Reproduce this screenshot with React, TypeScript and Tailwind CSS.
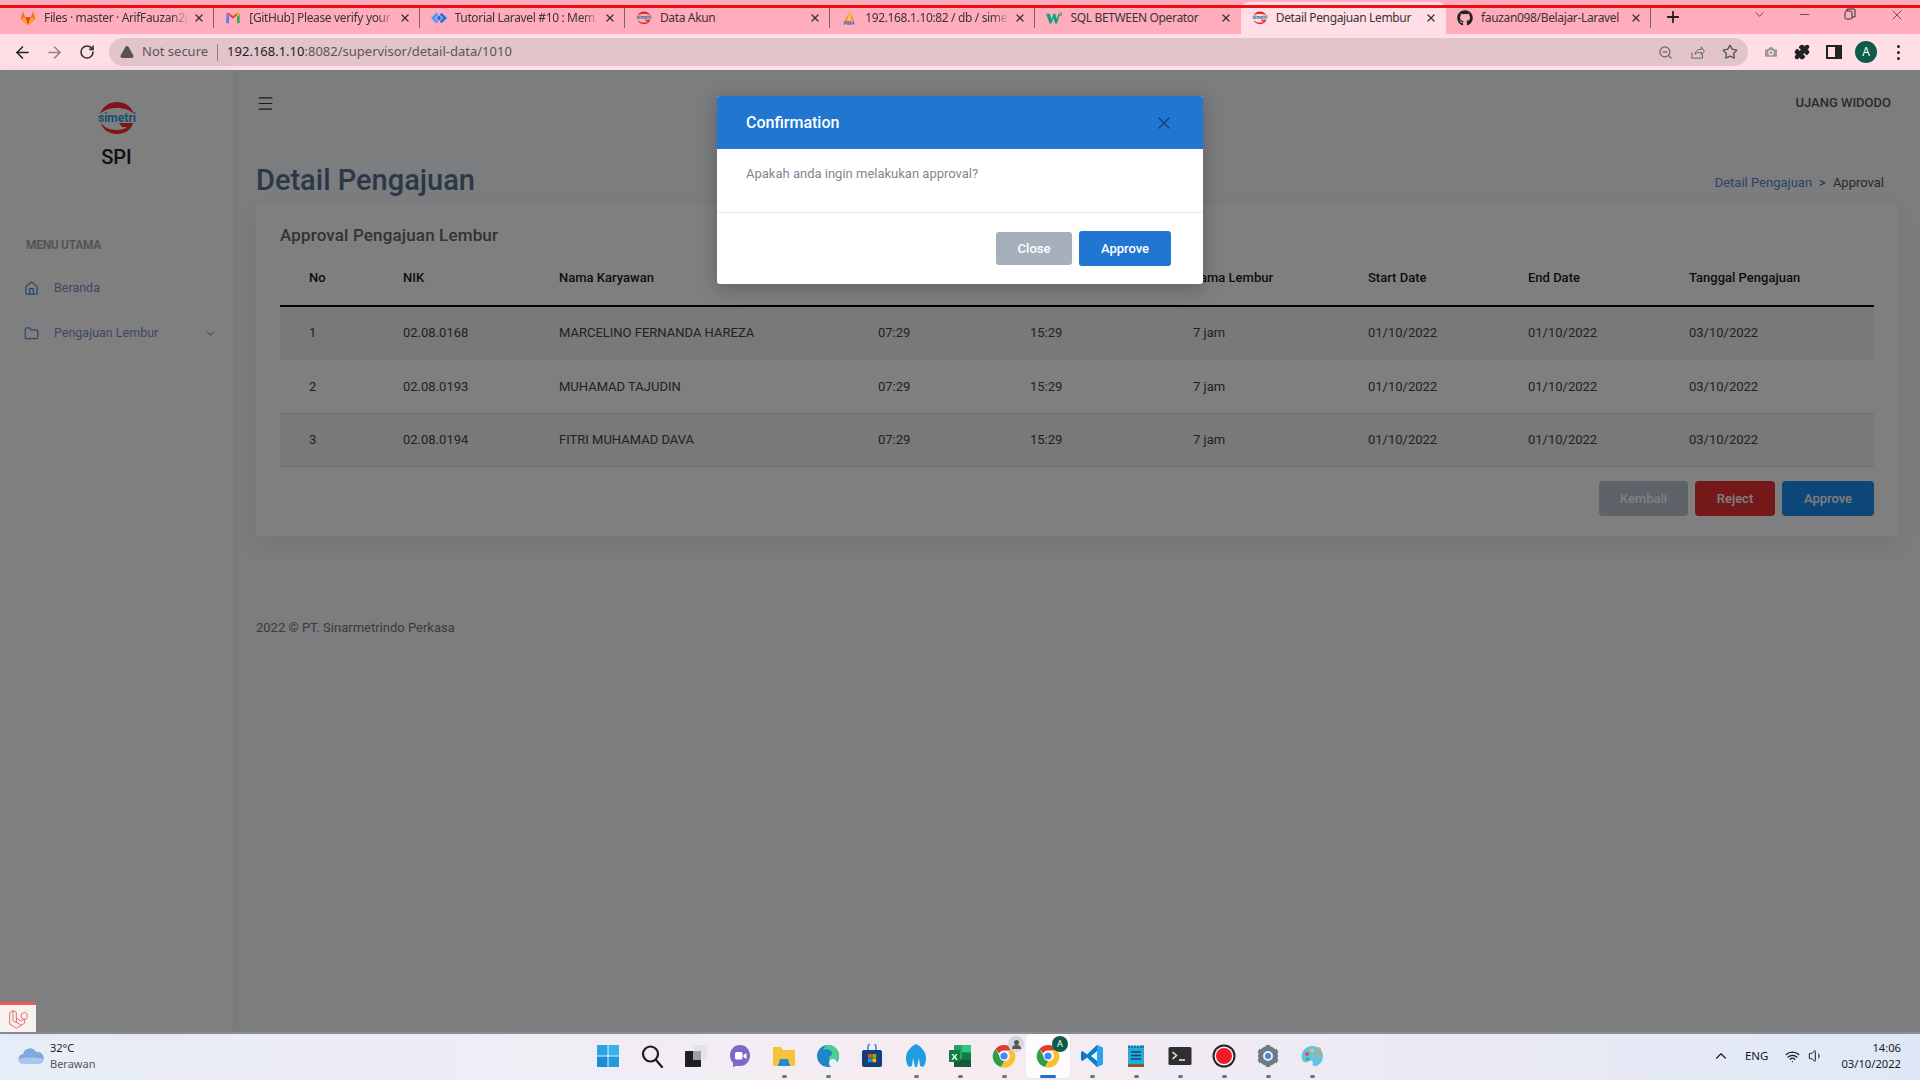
import { ReactNode } from "react";
import {
  ArrowLeft,
  ArrowRight,
  Camera,
  ChevronDown,
  ChevronUp,
  Folder,
  House,
  Menu,
  Minus,
  Plus,
  Puzzle,
  RotateCw,
  Star,
  TriangleAlert,
  Volume1,
  Wifi,
  X,
  ZoomOut,
} from "lucide-react";
import { FaGithub } from "react-icons/fa";

function SimetriLogo({ size = 16, red = "#e0262c", teal = "#1f6f9f" }: { size?: number; red?: string; teal?: string }) {
  return (
    <svg width={size} height={size * 0.85} viewBox="0 0 40 34">
      <path d="M3 13C6 5 12 1 20 1s14 4 17 12c-4-4-10-6-17-6S7 9 3 13z" fill={red} />
      <path d="M4 22c2 7 8 11 16 11 8 0 14-4 16-11H22l3 4h5c-2 2-6 3-10 3-7 0-12-2-16-7z" fill={red} />
      <text x="20" y="21" textAnchor="middle" fontSize="12" fontWeight="700" textLength="38" lengthAdjust="spacingAndGlyphs" fontFamily="Roboto, sans-serif" fill={teal}>
        simetri
      </text>
    </svg>
  );
}

function GitlabIcon() {
  return (
    <svg width="16" height="16" viewBox="0 0 24 24">
      <path d="M12 23 1 14 4 2l4 9h8l4-9 3 12z" fill="#fc6d26" />
      <path d="M12 23 8 11h8z" fill="#e24329" />
      <path d="M12 23 1 14l7-3zM12 23l11-9-7-3z" fill="#fca326" />
    </svg>
  );
}

function GmailIcon() {
  return (
    <svg width="16" height="16" viewBox="0 0 24 24">
      <path d="M2 5v15h4V10z" fill="#4285f4" />
      <path d="M22 5v15h-4V10z" fill="#34a853" />
      <path d="M2 5l10 8 10-8-3-1-7 5-7-5z" fill="#ea4335" />
      <path d="M18 5v5l4-3V5z" fill="#fbbc04" />
    </svg>
  );
}

function DiamondIcon() {
  return (
    <svg width="16" height="16" viewBox="0 0 24 24">
      <path d="M8 4 0 12l8 8 3-3-5-5 5-5z" fill="#4a9bf0" />
      <path d="M16 4l8 8-8 8-3-3 5-5-5-5z" fill="#1a73e8" />
      <path d="M12 8l4 4-4 4-4-4z" fill="#1a73e8" />
    </svg>
  );
}

function PmaIcon() {
  return (
    <svg width="18" height="18" viewBox="0 0 24 24">
      <path d="M13 1 5 16h15z" fill="#f0a030" />
      <path d="M13 1 10 16h5z" fill="#f8c870" />
      <text x="12" y="23" textAnchor="middle" fontSize="7.5" fontWeight="700" fontStyle="italic" fontFamily="Liberation Sans, sans-serif" fill="#39579a">
        PMA
      </text>
    </svg>
  );
}

function W3Icon() {
  return (
    <svg width="18" height="16" viewBox="0 0 26 22">
      <path d="M0 4h6l3 9 3-9h3l3 9 2-9h3l-5 16h-3l-3-9-3 9H6z" fill="#10a37f" />
      <text x="24" y="8" textAnchor="middle" fontSize="8" fontWeight="700" fontFamily="Roboto, sans-serif" fill="#10a37f">
        3
      </text>
    </svg>
  );
}

const tabs: { title: string; icon: ReactNode; active?: boolean; fade?: boolean; sep?: boolean }[] = [
  { title: "Files · master · ArifFauzan2(", icon: <GitlabIcon />, fade: true, sep: true },
  { title: "[GitHub] Please verify your", icon: <GmailIcon />, fade: true, sep: true },
  { title: "Tutorial Laravel #10 : Mem", icon: <DiamondIcon />, fade: true, sep: true },
  { title: "Data Akun", icon: <SimetriLogo />, sep: true },
  { title: "192.168.1.10:82 / db / sime", icon: <PmaIcon />, fade: true, sep: true },
  { title: "SQL BETWEEN Operator", icon: <W3Icon /> },
  { title: "Detail Pengajuan Lembur", icon: <SimetriLogo />, active: true },
  { title: "fauzan098/Belajar-Laravel", icon: <FaGithub size={16} color="#222" />, sep: true },
];

function BrowserTab({ title, icon, active, fade, sep }: { title: string; icon: ReactNode; active?: boolean; fade?: boolean; sep?: boolean }) {
  return (
    <div
      className={
        active
          ? "flex h-[32px] w-[205.300px] items-center rounded-t-lg bg-[#ffdfe5] pl-[11px]"
          : "flex h-[32px] w-[205.300px] items-center pl-[11px]"
      }
    >
      <span className="flex w-[16px] shrink-0 items-center justify-center">{icon}</span>
      <span
        className={
          fade
            ? "ml-[8px] min-w-0 flex-1 whitespace-nowrap text-[12px] tracking-[-0.35px] text-[#3a3436] [mask-image:linear-gradient(to_right,black_88%,transparent)]"
            : "ml-[8px] min-w-0 flex-1 whitespace-nowrap text-[12px] tracking-[-0.35px] text-[#3a3436]"
        }
      >
        {title}
      </span>
      <X size={12} strokeWidth={2.6} className="ml-[4px] shrink-0 text-[#333]" />
      <span className={sep ? "ml-[8px] h-[20px] w-px shrink-0 bg-[#7a6468]" : "ml-[8px] h-[20px] w-px shrink-0 bg-transparent"} />
    </div>
  );
}

function Chrome({ badge }: { badge: ReactNode }) {
  return (
    <div className="relative h-[24px] w-[24px]">
      <svg width="24" height="24" viewBox="0 0 24 24">
        <path d="M12 1a11 11 0 0 1 9.500 5.500H12A5.500 5.500 0 0 0 7 9.500L3.500 5A11 11 0 0 1 12 1z" fill="#e33b2e" />
        <path d="M3.500 5 8 13a5 5 0 0 0 4.500 4L9 23A11 11 0 0 1 3.500 5z" fill="#2d9d48" />
        <path d="M21.500 6.500A11 11 0 0 1 9 23l4-6a5 5 0 0 0 4-8 5 5 0 0 0-1-2.500z" fill="#fbc02d" />
        <circle cx="12" cy="12" r="4.600" fill="#fff" />
        <circle cx="12" cy="12" r="3.600" fill="#4285f4" />
      </svg>
      {badge}
    </div>
  );
}

const taskIcons: { icon: ReactNode; dot?: boolean; active?: boolean }[] = [
  {
    icon: (
      <svg width="24" height="24" viewBox="0 0 24 24">
        <rect x="1" y="1" width="10.500" height="10.500" fill="#2aa4e8" />
        <rect x="12.500" y="1" width="10.500" height="10.500" fill="#36b4f0" />
        <rect x="1" y="12.500" width="10.500" height="10.500" fill="#1a8cd8" />
        <rect x="12.500" y="12.500" width="10.500" height="10.500" fill="#1f9ae0" />
      </svg>
    ),
  },
  {
    icon: (
      <svg width="24" height="24" viewBox="0 0 24 24" fill="none" stroke="#1b1b1b" strokeWidth="2.200" strokeLinecap="round">
        <circle cx="10.500" cy="10" r="7.500" />
        <path d="M16 16l6 7" />
      </svg>
    ),
  },
  {
    icon: (
      <svg width="24" height="24" viewBox="0 0 24 24">
        <rect x="9" y="1" width="14" height="15" rx="1" fill="#e4e4e8" />
        <rect x="1" y="7" width="16" height="16" rx="1" fill="#1f1f1f" />
        <rect x="9" y="7" width="8" height="9" fill="#a0a0a4" />
      </svg>
    ),
  },
  {
    icon: (
      <svg width="24" height="24" viewBox="0 0 24 24">
        <path d="M12 1c6 0 10 5 10 10.500S18 22 12 22c-1 0-2 0-3-.3L5 23v-4C3 17 2 14 2 11.500 2 6 6 1 12 1z" fill="#7b68c8" />
        <rect x="7" y="8" width="7.500" height="7.500" rx="1.500" fill="#fff" />
        <path d="M15.500 11l3-2v6l-3-2z" fill="#fff" />
      </svg>
    ),
  },
  {
    icon: (
      <svg width="24" height="24" viewBox="0 0 24 24">
        <path d="M1 3h8l2 3h12v16H1z" fill="#f5c33b" />
        <path d="M8 15h8l2 7H6z" fill="#2b86d0" />
      </svg>
    ),
    dot: true,
  },
  {
    icon: (
      <svg width="24" height="24" viewBox="0 0 24 24">
        <circle cx="12" cy="12" r="11" fill="#1c86c8" />
        <path d="M12 1a11 11 0 0 1 11 11c0 3-3 5-6 5-3 0-4-2-4-3 0-2 3-2 3-5 0-3-5-5-9-3 1-3 3-5 5-5z" fill="#4fd08a" />
        <circle cx="17" cy="19" r="4" fill="#eaeef6" />
      </svg>
    ),
    dot: true,
  },
  {
    icon: (
      <svg width="24" height="24" viewBox="0 0 24 24">
        <path d="M8 6V3a4 4 0 0 1 8 0v3" fill="none" stroke="#2f8fd0" strokeWidth="1.600" />
        <rect x="2" y="6" width="20" height="17" rx="2" fill="#143d78" />
        <rect x="8" y="10" width="3.800" height="3.800" fill="#f25022" />
        <rect x="12.400" y="10" width="3.800" height="3.800" fill="#7fba00" />
        <rect x="8" y="14.400" width="3.800" height="3.800" fill="#00a4ef" />
        <rect x="12.400" y="14.400" width="3.800" height="3.800" fill="#ffb900" />
      </svg>
    ),
  },
  {
    icon: (
      <svg width="24" height="24" viewBox="0 0 24 24">
        <path d="M12 0c6 3 10 8 10 14 0 4-1 7-3 9l-3-1-1-8-2 9h-2l-2-9-1 8-3 1c-2-2-3-5-3-9C2 8 6 3 12 0z" fill="#1f9de0" />
      </svg>
    ),
    dot: true,
  },
  {
    icon: (
      <svg width="24" height="24" viewBox="0 0 24 24">
        <rect x="6" y="1" width="17" height="22" rx="1" fill="#21a366" />
        <rect x="14" y="1" width="9" height="7.500" fill="#33c481" />
        <rect x="14" y="8.500" width="9" height="7" fill="#107c41" />
        <rect x="6" y="15.500" width="17" height="7.500" fill="#185c37" />
        <rect x="1" y="6" width="11" height="12" rx="1" fill="#107c41" />
        <text x="6.500" y="15.500" textAnchor="middle" fontSize="9.500" fontWeight="700" fontFamily="Liberation Sans, sans-serif" fill="#fff">
          X
        </text>
      </svg>
    ),
    dot: true,
  },
  {
    icon: (
      <Chrome
        badge={
          <span className="absolute right-[-8px] top-[-8px] flex h-[16px] w-[16px] items-center justify-center rounded-full bg-[#d3d6da]">
            <span className="mt-[-3px] h-[5px] w-[5px] rounded-full bg-[#555]" />
            <span className="absolute bottom-[3px] h-[4px] w-[9px] rounded-t-full bg-[#555]" />
          </span>
        }
      />
    ),
    dot: true,
  },
  {
    icon: (
      <Chrome
        badge={
          <span className="absolute right-[-8px] top-[-8px] flex h-[16px] w-[16px] items-center justify-center rounded-full bg-[#0d5c4b] text-[9px] text-white">
            A
          </span>
        }
      />
    ),
    active: true,
  },
  {
    icon: (
      <svg width="24" height="24" viewBox="0 0 24 24">
        <path d="M17 1l6 3v16l-6 3-10-9.500L2.500 17 1 16v-8l1.500-1L7 10.500z" fill="#0a7acc" />
        <path d="M17 1l6 3v16l-6 3z" fill="#2ba3ee" />
        <path d="M17 7l-6 5 6 5z" fill="#f3f1f5" />
      </svg>
    ),
    dot: true,
  },
  {
    icon: (
      <svg width="24" height="24" viewBox="0 0 24 24">
        <rect x="4" y="2" width="16" height="21" rx="1" fill="#25a9e0" />
        <rect x="4" y="20" width="16" height="3" fill="#8a5a2c" />
        <path d="M5 1v3M8 1v3M11 1v3M14 1v3M17 1v3M19 1v3" stroke="#174a6e" strokeWidth="1" />
        <path d="M7 8h10M7 11.500h10M7 15h10" stroke="#123f66" strokeWidth="1.400" />
      </svg>
    ),
    dot: true,
  },
  {
    icon: (
      <svg width="24" height="24" viewBox="0 0 24 24">
        <rect x="0.500" y="3" width="23" height="18" rx="1.500" fill="#2f2f2f" />
        <path d="M4.500 8l4 3.500-4 3.500" fill="none" stroke="#eee" strokeWidth="1.500" />
        <path d="M11 16h6" stroke="#eee" strokeWidth="1.500" />
      </svg>
    ),
    dot: true,
  },
  {
    icon: (
      <svg width="24" height="24" viewBox="0 0 24 24">
        <circle cx="12" cy="12" r="11.500" fill="#222" />
        <circle cx="12" cy="12" r="9.500" fill="#f4f4f4" />
        <circle cx="12" cy="12" r="8" fill="#ee1c25" />
      </svg>
    ),
    dot: true,
  },
  {
    icon: (
      <svg width="24" height="24" viewBox="0 0 24 24" fill="none">
        <circle cx="12" cy="12" r="7.500" stroke="#6d7a88" strokeWidth="5" />
        <path d="M12 1v4M12 19v4M2.500 6.500l3.400 2M18 15.500l3.500 2M2.500 17.500l3.400-2M18 8.500l3.500-2" stroke="#6d7a88" strokeWidth="4" />
        <circle cx="12" cy="12" r="3" fill="#3d8fd0" />
      </svg>
    ),
    dot: true,
  },
  {
    icon: (
      <svg width="24" height="24" viewBox="0 0 24 24">
        <path d="M12 2c6 0 11 4 11 10 0 7-6 11-9 10-3-1 0-4-2-5-3-1-5 3-8 1C1 16 1 11 3 7c2-3 5-5 9-5z" fill="#62c3e6" />
        <circle cx="7" cy="10" r="2" fill="#e8483f" />
        <circle cx="12" cy="6.500" r="2" fill="#f5c33b" />
        <circle cx="7.500" cy="15" r="1.800" fill="#4caf50" />
        <path d="M19 3l2 1-3 10-2-1z" fill="#e0a050" />
      </svg>
    ),
    dot: true,
  },
];

const rows = [
  { no: 1, nik: "02.08.0168", nama: "MARCELINO FERNANDA HAREZA" },
  { no: 2, nik: "02.08.0193", nama: "MUHAMAD TAJUDIN" },
  { no: 3, nik: "02.08.0194", nama: "FITRI MUHAMAD DAVA" },
];

const headers = ["No", "NIK", "Nama Karyawan", "Jam Mulai", "Jam Selesai", "Lama Lembur", "Start Date", "End Date", "Tanggal Pengajuan"];

export default function App() {
  return (
    <div className="relative flex h-screen w-full flex-col overflow-hidden font-['Noto_Sans',sans-serif]">
      {/* chrome tab strip */}
      <div className="relative flex h-[34px] shrink-0 items-end bg-[#ffadbc] pl-[9px]">
        {tabs.map((t) => (
          <BrowserTab key={t.title} title={t.title} icon={t.icon} active={t.active} fade={t.fade} sep={t.sep} />
        ))}
        <Plus size={18} strokeWidth={2.400} className="mb-[8px] ml-[13px] text-[#222]" />
        <div className="ml-auto flex h-full items-start pt-[7px] text-[#333]">
          <ChevronDown size={15} strokeWidth={1.200} className="mr-[30px]" />
          <Minus size={15} strokeWidth={1.200} className="mr-[32px]" />
          <svg width="12" height="12" viewBox="0 0 12 12" fill="none" stroke="#333" className="mr-[33px] mt-[1px]">
            <rect x="1" y="3" width="7" height="8" rx="1.500" />
            <path d="M3 3V1h7a1 1 0 0 1 1 1v7H8" />
          </svg>
          <X size={16} strokeWidth={1.100} className="mr-[15px]" />
        </div>
        <div className="absolute inset-x-0 top-[5px] h-[3px] bg-[#ee0f14]" />
      </div>

      {/* chrome toolbar */}
      <div className="flex h-[36px] shrink-0 items-center bg-[#ffdfe5] pl-[13px]">
        <ArrowLeft size={19} className="text-[#222]" />
        <ArrowRight size={19} className="ml-[13px] text-[#8f8689]" />
        <RotateCw size={16} strokeWidth={2.400} className="ml-[15px] text-[#333]" />
        <div className="ml-[14px] flex h-[28px] w-[1639px] items-center rounded-full bg-[#e2c4ca] pl-[11px] pr-[10px]">
          <TriangleAlert size={14} strokeWidth={2.400} fill="#555" className="text-[#555]" />
          <span className="ml-[8px] text-[13px] text-[#5c5457]">Not secure</span>
          <span className="ml-[9px] h-[17px] w-px bg-[#8f7f83]" />
          <span className="ml-[9px] text-[13px] text-[#222]">
            192.168.1.10<span className="text-[#5c5457]">:8082/supervisor/detail-data/1010</span>
          </span>
          <ZoomOut size={15} className="ml-auto text-[#666]" />
          <svg width="15" height="15" viewBox="0 0 24 24" fill="none" stroke="#666" strokeWidth="1.600" className="ml-[17px]">
            <path d="M3 12v9h17v-6M8 15c1-6 5-8 10-8V3l5 7-5 6v-4c-4 0-8 0-10 3z" />
          </svg>
          <Star size={16} className="ml-[17px] text-[#555]" />
        </div>
        <Camera size={16} fill="#999" className="ml-[15px] text-[#ffdfe5]" />
        <Puzzle size={16} fill="#222" className="ml-[15px] text-[#222]" />
        <span className="ml-[16px] h-[14px] w-[16px] border-[2px] border-r-[7px] border-[#222]" />
        <span className="ml-[13px] flex h-[22px] w-[22px] items-center justify-center rounded-full bg-[#0d5c4b] text-[12px] text-white">A</span>
        <span className="ml-[20px] flex flex-col gap-[3px]">
          <span className="h-[3px] w-[3px] rounded-full bg-[#222]" />
          <span className="h-[3px] w-[3px] rounded-full bg-[#222]" />
          <span className="h-[3px] w-[3px] rounded-full bg-[#222]" />
        </span>
      </div>

      {/* web page */}
      <div className="relative flex min-h-0 flex-1 bg-[#f9fafe] font-['Roboto',sans-serif]">
        <aside className="flex w-[233px] shrink-0 flex-col bg-white shadow-[0_0_12px_rgba(0,0,0,0.06)]">
          <div className="flex flex-col items-center pt-[31px]">
            <SimetriLogo size={40} red="#ff2a30" teal="#28a0de" />
            <span className="mt-[9px] text-[20px] font-medium leading-[26px] text-[#222]">SPI</span>
          </div>
          <div className="mt-[67px] pl-[26px] text-[12px] font-bold leading-[16px] tracking-[-0.3px] text-[#a8a8a8]">MENU UTAMA</div>
          <div className="mt-[23px] flex h-[24px] items-center pl-[24px] text-[12.500px] text-[#7d8fc6]">
            <House size={15} className="text-[#5b8fe8]" />
            <span className="ml-[15px]">Beranda</span>
          </div>
          <div className="mt-[21px] flex h-[24px] items-center pl-[24px] pr-[16px] text-[12.500px] text-[#7d8fc6]">
            <Folder size={15} className="text-[#5b8fe8]" />
            <span className="ml-[15px]">Pengajuan Lembur</span>
            <ChevronDown size={13} className="ml-auto text-[#aaa]" />
          </div>
        </aside>

        <main className="min-w-0 flex-1">
          <div className="flex h-[66px] items-center justify-between pl-[23px] pr-[29px]">
            <Menu size={19} strokeWidth={1.500} className="text-[#333]" />
            <span className="text-[13px] font-medium text-[#555]">UJANG WIDODO</span>
          </div>

          <div className="pl-[23px] pr-[22px]">
            <div className="flex h-[69px] items-center justify-between pb-[2px] pt-[20px]">
              <h1 className="text-[29px] font-medium leading-[36px] text-[#547090]">Detail Pengajuan</h1>
              <div className="mr-[14px] mt-[7px] text-[13px] text-[#555]">
                <span className="text-[#5888d0]">Detail Pengajuan</span>
                <span className="mx-[7px]">&gt;</span>
                <span>Approval</span>
              </div>
            </div>

            <div className="rounded-[3px] bg-white pb-[20px] pl-[24px] pr-[24px] pt-[20px] shadow-[0_8px_24px_rgba(0,0,0,0.08)]">
              <h2 className="text-[17px] font-medium leading-[20px] tracking-[0.15px] text-[#666]">Approval Pengajuan Lembur</h2>
              <table className="mt-[5px] w-full table-fixed border-collapse text-[13px] text-[#444]">
                <colgroup>
                  <col className="w-[94px]" />
                  <col className="w-[156px]" />
                  <col className="w-[319px]" />
                  <col className="w-[152px]" />
                  <col className="w-[163px]" />
                  <col className="w-[175px]" />
                  <col className="w-[160px]" />
                  <col className="w-[161px]" />
                  <col className="w-[214px]" />
                </colgroup>
                <thead>
                  <tr className="h-[56px] border-b-2 border-[#000]">
                    {headers.map((h) => (
                      <th key={h} className="pl-[29px] text-left font-medium text-[#1c1c1c]">
                        {h}
                      </th>
                    ))}
                  </tr>
                </thead>
                <tbody>
                  {rows.map((r) => (
                    <tr key={r.no} className={r.no % 2 === 1 ? "h-[53.500px] border-b border-[#e8e8e8] bg-[#f2f2f2]" : "h-[53.500px] border-b border-[#e8e8e8]"}>
                      <td className="pl-[29px]">{r.no}</td>
                      <td className="pl-[29px]">{r.nik}</td>
                      <td className="pl-[29px]">{r.nama}</td>
                      <td className="pl-[29px]">07:29</td>
                      <td className="pl-[29px]">15:29</td>
                      <td className="pl-[29px]">7 jam</td>
                      <td className="pl-[29px]">01/10/2022</td>
                      <td className="pl-[29px]">01/10/2022</td>
                      <td className="pl-[29px]">03/10/2022</td>
                    </tr>
                  ))}
                </tbody>
              </table>
              <div className="mt-[14px] flex justify-end gap-[7px] text-[13px] font-medium">
                <button className="h-[35px] w-[89px] rounded-[4px] bg-[#bcc6d2] text-white">Kembali</button>
                <button className="h-[35px] w-[80px] rounded-[4px] bg-[#e83034] text-white">Reject</button>
                <button className="h-[35px] w-[92px] rounded-[4px] bg-[#1a8cf0] text-white">Approve</button>
              </div>
            </div>

            <p className="mt-[82px] text-[13px] leading-[20px] text-[#777]">2022 © PT. Sinarmetrindo Perkasa</p>
          </div>
        </main>

        {/* modal backdrop */}
        <div className="absolute inset-0 bg-black/50" />

        <div className="absolute left-[717px] top-[26px] w-[486px] overflow-hidden rounded-[3px] bg-white shadow-[0_4px_20px_rgba(0,0,0,0.25)]">
          <div className="flex h-[53px] items-center justify-between bg-[#2076d1] pl-[29px] pr-[29px]">
            <span className="text-[16px] font-medium text-white">Confirmation</span>
            <X size={20} strokeWidth={1.500} className="text-[#123f70]" />
          </div>
          <div className="flex h-[64px] items-start border-b border-[#e4e6ea] pl-[29px] pt-[15px] text-[13px] leading-[20px] text-[#7f8790]">
            Apakah anda ingin melakukan approval?
          </div>
          <div className="flex h-[71px] items-start justify-end gap-[7px] pr-[32px] pt-[18px] text-[13px] font-medium text-white">
            <button className="mt-px h-[33px] w-[76px] rounded-[3px] bg-[#a6b0bd]">Close</button>
            <button className="h-[35px] w-[92px] rounded-[3px] bg-[#2076d1]">Approve</button>
          </div>
        </div>

        {/* debugbar tab */}
        <div className="absolute bottom-0 left-0 flex h-[30px] w-[36px] items-center justify-center border-t-[3px] border-[#e8585e] bg-[#f5f2f0]">
          <svg width="20" height="20" viewBox="0 0 24 24" fill="none" stroke="#e8585e" strokeWidth="1">
            <path d="M2 4l4-2 4 2v12l6 3.500M2 4v14l8 5 10-6v-5l-4 2.500-6-3.500M6 2v12l4 2.500M16 6l4-2 3 2v5l-3 1.500M16 6v5l4 1.500" />
          </svg>
        </div>
      </div>

      {/* windows taskbar */}
      <div className="grid h-[48px] shrink-0 grid-cols-[1fr_auto_1fr] items-center border-t-2 border-[#8b8d93] bg-gradient-to-r from-[#e7edf8] via-[#f6ecf2] to-[#dfe8f6] pb-[2px] font-['Noto_Sans',sans-serif]">
        <div className="flex items-center pl-[18px]">
          <svg width="26" height="18" viewBox="0 0 26 18">
            <path d="M6 17a5 5 0 0 1-1-10 7 7 0 0 1 13-2 6 6 0 0 1 3 12z" fill="#7fa8dc" />
            <path d="M1 12c6-2 18-2 24 0-1 3-3 5-5 5H6c-3 0-5-2-5-5z" fill="#a9c8ec" />
          </svg>
          <div className="ml-[6px] text-[11px] leading-[16px]">
            <div className="text-[#1a1a1a]">32°C</div>
            <div className="text-[#555]">Berawan</div>
          </div>
        </div>

        <div className="flex h-[44px] items-center">
          {taskIcons.map((t, i) => (
            <div
              key={i}
              className={
                t.active
                  ? "relative flex h-[44px] w-[44px] items-center justify-center rounded-[4px] bg-white/80 shadow-[0_0_1px_rgba(0,0,0,0.3)]"
                  : "relative flex h-[44px] w-[44px] items-center justify-center"
              }
            >
              {t.icon}
              {t.active ? (
                <span className="absolute bottom-[0px] h-[3px] w-[16px] rounded-full bg-[#1f6fc9]" />
              ) : t.dot ? (
                <span className="absolute bottom-[0px] h-[3px] w-[5px] rounded-full bg-[#70757d]" />
              ) : null}
            </div>
          ))}
        </div>

        <div className="flex items-center justify-end pr-[19px] text-[#1a1a1a]">
          <ChevronUp size={18} strokeWidth={1.500} />
          <span className="ml-[15px] text-[11.500px]">ENG</span>
          <Wifi size={15} className="ml-[17px]" />
          <Volume1 size={16} strokeWidth={1.500} className="ml-[8px]" />
          <div className="ml-[17px] text-right text-[11.200px] leading-[16px]">
            <div>14:06</div>
            <div>03/10/2022</div>
          </div>
        </div>
      </div>
    </div>
  );
}
